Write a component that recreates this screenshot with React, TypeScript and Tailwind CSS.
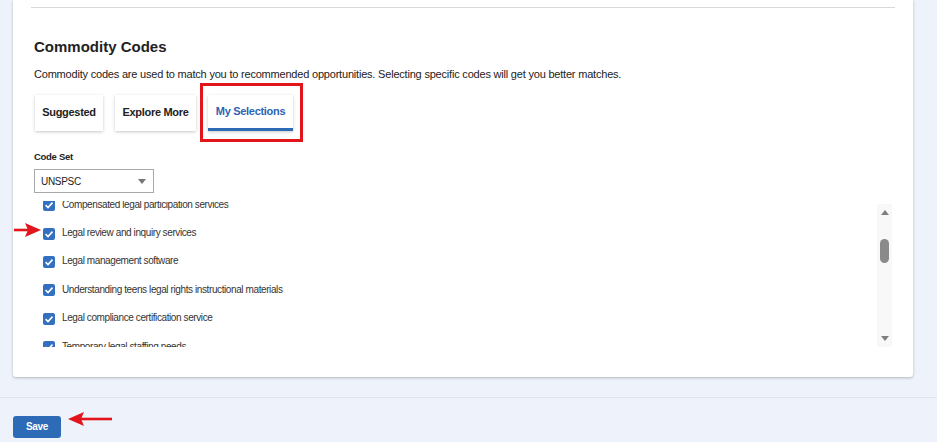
import React from "react";

const codes = [
  "Legal research services",
  "Compensated legal participation services",
  "Legal review and inquiry services",
  "Legal management software",
  "Understanding teens legal rights instructional materials",
  "Legal compliance certification service",
  "Temporary legal staffing needs",
  "Legal assistance services",
];

function CheckIcon() {
  return (
    <svg viewBox="0 0 12 12" className="h-[12px] w-[12px]">
      <rect width="12" height="12" rx="2" fill="#3370c0" />
      <path d="M2.6 6.2 L5 8.5 L9.5 3.6" fill="none" stroke="#fff" strokeWidth="1.6" />
    </svg>
  );
}

function RedArrow({ dir, length }: { dir: "left" | "right"; length: number }) {
  return (
    <svg viewBox={`0 0 ${length} 14`} width={length} height={14}>
      {dir === "right" ? (
        <>
          <line x1="0" y1="7" x2={length - 12} y2="7" stroke="#e3151c" strokeWidth="2.6" />
          <polygon points={`${length},7 ${length - 16},0 ${length - 13},7 ${length - 16},14`} fill="#e3151c" />
        </>
      ) : (
        <>
          <line x1="12" y1="7" x2={length} y2="7" stroke="#e3151c" strokeWidth="2.6" />
          <polygon points="0,7 16,0 13,7 16,14" fill="#e3151c" />
        </>
      )}
    </svg>
  );
}

export default function App() {
  return (
    <div
      className="relative min-h-screen bg-[#eef2fa] text-[#333]"
      style={{ fontFamily: '"Liberation Sans", Arial, sans-serif' }}
    >
      {/* Card */}
      <div className="ml-[13px] w-[900px] rounded-b-[3px] bg-white px-[18px] pb-[30px] pt-[7px] shadow-[0_1px_3px_rgba(0,0,0,0.25)]">
        <div className="border-t border-[#d9d9d9]" />
        <div className="px-[3px]">
          <h2 className="mt-[29px] text-[15px] font-bold leading-[20px] text-[#222]">
            Commodity Codes
          </h2>
          <p className="mt-[9px] text-[11px] leading-[16px] tracking-[-0.2px] text-[#222]">
            Commodity codes are used to match you to recommended opportunities. Selecting specific codes will get you better matches.
          </p>

          {/* Tabs */}
          <div className="ml-[1px] mt-[13px] flex gap-[12px] text-[11px] font-bold tracking-[-0.3px]">
            <div className="flex h-[36px] w-[68px] items-center justify-center pb-[2px] text-[#222] shadow-[0_1px_3px_rgba(0,0,0,0.22)]">
              Suggested
            </div>
            <div className="flex h-[36px] w-[81px] items-center justify-center pb-[2px] text-[#222] shadow-[0_1px_3px_rgba(0,0,0,0.22)]">
              Explore More
            </div>
            <div className="relative flex h-[36px] w-[85px] flex-col shadow-[0_1px_3px_rgba(0,0,0,0.22)]">
              <div className="flex flex-1 items-center justify-center text-[#2d64b4]">
                My Selections
              </div>
              <div className="h-[3px] bg-[#2d6bb7]" />
              <div className="pointer-events-none absolute -bottom-[11px] -left-[8px] -right-[10px] -top-[12px] border-[3px] border-[#e3151c]" />
            </div>
          </div>

          <div className="mt-[19px] text-[9.5px] font-bold leading-[14px] tracking-[-0.3px] text-[#222]">Code Set</div>
          <div className="mt-[5px] flex h-[24px] w-[120px] items-center justify-between border border-[#a9a9a9] pl-[6px] pr-[7px] text-[10px] tracking-[-0.3px] text-[#222]">
            <span>UNSPSC</span>
            <span className="border-x-[4px] border-t-[5px] border-x-transparent border-t-[#777]" />
          </div>

          {/* Selected codes list */}
          <div className="mt-[8px] flex h-[146px]">
            <div className="flex-1 overflow-hidden">
              <div className="-mt-[39.4px]">
                {codes.map((c) => (
                  <div key={c} className="flex h-[28.4px] items-center gap-[7px] pl-[9px]">
                    <span className="mt-[2px]">
                      <CheckIcon />
                    </span>
                    <span className="text-[10px] tracking-[-0.4px] text-[#333]">{c}</span>
                  </div>
                ))}
              </div>
            </div>
            <div className="mt-[3px] flex w-[15px] flex-col items-center bg-[#f8f8f8]">
              <span className="mt-[6px] border-x-[4px] border-b-[5px] border-x-transparent border-b-[#7f7f7f]" />
              <span className="mt-[24px] h-[24px] w-[9px] rounded-full bg-[#8a8a8a]" />
              <span className="mb-[6px] mt-auto border-x-[4px] border-t-[5px] border-x-transparent border-t-[#7f7f7f]" />
            </div>
          </div>
        </div>
      </div>

      {/* Footer */}
      <div className="mt-[20px] border-t border-[#dfe3ec] pl-[13px] pt-[15px]">
        <button className="h-[22px] w-[48px] rounded-[3px] bg-[#2d6bb7] text-[10px] font-bold tracking-[-0.3px] text-white">
          Save
        </button>
      </div>

      {/* Annotation arrows */}
      <div className="absolute left-[14px] top-[223px]">
        <RedArrow dir="right" length={27} />
      </div>
      <div className="absolute left-[68px] top-[412px]">
        <RedArrow dir="left" length={44} />
      </div>
    </div>
  );
}
